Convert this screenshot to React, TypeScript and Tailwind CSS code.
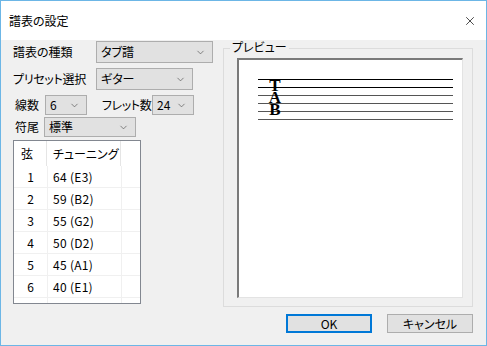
import { ChevronDown, X } from "lucide-react";

function Combo({ value, className }: { value: string; className: string }) {
  return (
    <div
      className={`flex items-center justify-between border border-[#adadad] bg-[#e1e1e1] pl-[4px] pr-[6px] text-[12px] leading-none text-black ${className}`}
    >
      <span className="whitespace-nowrap">{value}</span>
      <ChevronDown size={11} strokeWidth={1.5} className="text-[#555]" />
    </div>
  );
}

const strings = [
  ["1", "64 (E3)"],
  ["2", "59 (B2)"],
  ["3", "55 (G2)"],
  ["4", "50 (D2)"],
  ["5", "45 (A1)"],
  ["6", "40 (E1)"],
];

function TuningTable() {
  return (
    <div className="mt-[3px] flex h-[164px] w-[128px] flex-col overflow-hidden border border-[#828790] bg-white text-[12px] leading-none">
      <div className="flex h-[25px] shrink-0 items-center whitespace-nowrap">
        <div className="flex h-full w-[33px] items-center border-r border-[#e5e5e5] pl-[7px]">弦</div>
        <div className="flex h-full w-[74px] items-center border-r border-[#e5e5e5] pl-[6px]">チューニング</div>
      </div>
      {strings.map(([n, t]) => (
        <div key={n} className="flex h-[22px] shrink-0 items-center border-b border-[#f0f0f0]">
          <div className="flex h-full w-[34px] items-center justify-center border-r border-[#f0f0f0]">{n}</div>
          <div className="flex h-full w-[74px] items-center whitespace-nowrap border-r border-[#f0f0f0] pl-[5px] tracking-[0.3px]">{t}</div>
        </div>
      ))}
      <div className="flex h-full">
        <div className="w-[34px] border-r border-[#f0f0f0]" />
        <div className="w-[74px] border-r border-[#f0f0f0]" />
      </div>
    </div>
  );
}

function Staff() {
  const ys = [79, 87, 95, 103, 111, 119].map((y) => y - 60);
  return (
    <svg width="222" height="120" className="block">
      {ys.map((y, i) => (
        <line
          key={y}
          x1="19"
          x2="214"
          y1={y + 0.5}
          y2={y + 0.5}
          stroke={i < 2 ? "#000" : "#555"}
          strokeWidth="1"
        />
      ))}
      <text
        fontFamily='"Liberation Serif", serif'
        fontWeight="bold"
        fontSize="17"
        textAnchor="middle"
        fill="#000"
      >
        <tspan x="36" y="31">T</tspan>
        <tspan x="36" y="43">A</tspan>
        <tspan x="36" y="55">B</tspan>
      </text>
    </svg>
  );
}

export default function App() {
  return (
    <div className="h-[346px] w-[487px] border border-[#6cb6e6] bg-[#f0f0f0] font-['Noto_Sans_CJK_JP','Noto_Sans',sans-serif] text-black [font-feature-settings:'palt']">
      <div className="flex h-[39px] items-center justify-between bg-white pl-[8px] pr-[9px]">
        <span className="text-[12px]">譜表の設定</span>
        <X size={14} strokeWidth={1.2} />
      </div>
      <div className="flex pl-[12px] pt-[1px]">
        <div className="flex w-[200px] flex-col whitespace-nowrap text-[12px] leading-none">
          <div className="flex items-center">
            <span className="w-[83px]">譜表の種類</span>
            <Combo value="タブ譜" className="h-[22px] w-[117px]" />
          </div>
          <div className="mt-[5px] flex items-center">
            <span className="w-[83px] tracking-[-0.3px]">プリセット選択</span>
            <Combo value="ギター" className="h-[22px] w-[97px]" />
          </div>
          <div className="mt-[5px] flex items-center">
            <span className="ml-[2px] w-[30px]">線数</span>
            <Combo value="6" className="h-[20px] w-[42px]" />
            <span className="ml-[15px] w-[50px] tracking-[-0.4px]">フレット数</span>
            <Combo value="24" className="h-[20px] w-[42px]" />
          </div>
          <div className="mt-[2px] flex items-center">
            <span className="ml-[2px] w-[29px]">符尾</span>
            <Combo value="標準" className="h-[20px] w-[92px]" />
          </div>
          <TuningTable />
        </div>
        <div className="relative ml-[10px] mt-[7px] h-[259px] w-[250px] border border-[#dcdcdc] pb-[8px] pl-[13px] pr-[9px] pt-[9px]">
          <span className="absolute -top-[8px] left-[6px] whitespace-nowrap bg-[#f0f0f0] px-[2px] text-[12px] leading-none">プレビュー</span>
          <div className="h-[240px] w-[226px] border-l-2 border-t-2 border-b border-r border-l-[#7a7a7a] border-t-[#7a7a7a] border-b-[#e3e3e3] border-r-[#e3e3e3] bg-white">
            <Staff />
          </div>
        </div>
      </div>
      <div className="mt-[7px] flex justify-end gap-[15px] pr-[13px] text-[12px] leading-none">
        <button className="flex h-[19px] w-[86px] items-center justify-center border-2 border-[#0078d7] bg-[#e1e1e1]">OK</button>
        <button className="flex h-[19px] w-[86px] items-center justify-center border border-[#adadad] bg-[#e1e1e1]">キャンセル</button>
      </div>
    </div>
  );
}
